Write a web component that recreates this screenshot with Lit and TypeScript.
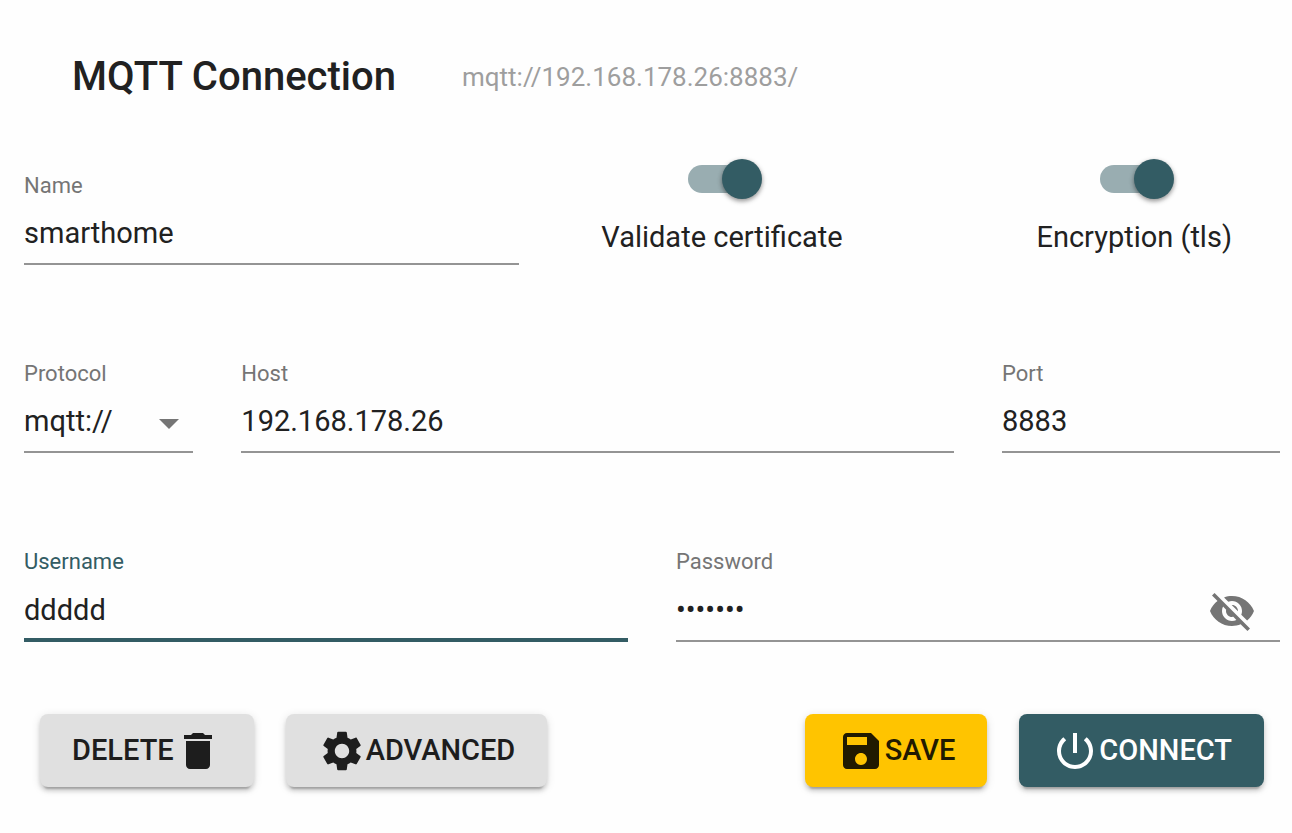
import { LitElement, html, css, svg } from "lit";
import { customElement, state } from "lit/decorators.js";

const ICONS = {
  remove: "M6 19c0 1.1.9 2 2 2h8c1.1 0 2-.9 2-2V7H6v12zM19 4h-3.5l-1-1h-5l-1 1H5v2h14V4z",
  settings:
    "M19.14 12.94c.04-.3.06-.61.06-.94 0-.32-.02-.64-.07-.94l2.03-1.58c.18-.14.23-.41.12-.61l-1.92-3.32c-.12-.22-.37-.29-.59-.22l-2.39.96c-.5-.38-1.03-.7-1.62-.94l-.36-2.54c-.04-.24-.24-.41-.48-.41h-3.84c-.24 0-.43.17-.47.41l-.36 2.54c-.59.24-1.13.57-1.62.94l-2.39-.96c-.22-.08-.47 0-.59.22L2.74 8.87c-.12.21-.08.47.12.61l2.03 1.58c-.05.3-.09.63-.09.94s.02.64.07.94l-2.03 1.58c-.18.14-.23.41-.12.61l1.92 3.32c.12.22.37.29.59.22l2.39-.96c.5.38 1.03.7 1.62.94l.36 2.54c.05.24.24.41.48.41h3.84c.24 0 .44-.17.47-.41l.36-2.54c.59-.24 1.13-.56 1.62-.94l2.39.96c.22.08.47 0 .59-.22l1.92-3.32c.12-.22.07-.47-.12-.61l-2.01-1.58zM12 15.6c-1.98 0-3.6-1.62-3.6-3.6s1.62-3.6 3.6-3.6 3.6 1.62 3.6 3.6-1.62 3.6-3.6 3.6z",
  save: "M17 3H5c-1.11 0-2 .9-2 2v14c0 1.1.89 2 2 2h14c1.1 0 2-.9 2-2V7l-4-4zm-5 16c-1.66 0-3-1.34-3-3s1.34-3 3-3 3 1.34 3 3-1.34 3-3 3zm3-10H5V5h10v4z",
  power:
    "M13 3h-2v10h2V3zm4.83 2.17l-1.42 1.42C17.99 7.86 19 9.81 19 12c0 3.87-3.13 7-7 7s-7-3.13-7-7c0-2.19 1.01-4.14 2.58-5.42L6.17 5.17C4.23 6.82 3 9.26 3 12c0 4.97 4.03 9 9 9s9-4.03 9-9c0-2.74-1.23-5.18-3.17-6.83z",
  hidden:
    "M12 7c2.76 0 5 2.24 5 5 0 .65-.13 1.26-.36 1.83l2.92 2.92c1.51-1.26 2.7-2.89 3.43-4.75-1.73-4.39-6-7.5-11-7.5-1.4 0-2.74.25-3.98.7l2.16 2.16C10.74 7.13 11.35 7 12 7zM2 4.27l2.28 2.28.46.46C3.08 8.3 1.78 10.02 1 12c1.73 4.39 6 7.5 11 7.5 1.55 0 3.03-.3 4.38-.84l.42.42L19.73 22 21 20.73 3.27 3 2 4.27zM7.53 9.8l1.55 1.55c-.05.21-.08.43-.08.65 0 1.66 1.34 3 3 3 .22 0 .44-.03.65-.08l1.55 1.55c-.67.33-1.41.53-2.2.53-2.76 0-5-2.24-5-5 0-.79.2-1.53.53-2.2zm4.31-.78l3.15 3.15.02-.16c0-1.66-1.34-3-3-3l-.17.01z",
  visible:
    "M12 4.5C7 4.5 2.73 7.61 1 12c1.73 4.39 6 7.5 11 7.5s9.27-3.11 11-7.5c-1.73-4.39-6-7.5-11-7.5zM12 17c-2.76 0-5-2.24-5-5s2.24-5 5-5 5 2.24 5 5-2.24 5-5 5zm0-8c-1.66 0-3 1.34-3 3s1.34 3 3 3 3-1.34 3-3-1.34-3-3-3z",
  caret: "M7 10l5 5 5-5z",
};

const icon = (name: keyof typeof ICONS) =>
  html`<svg class="icon" viewBox="0 0 24 24" aria-hidden="true">${svg`<path d=${ICONS[name]}></path>`}</svg>`;

@customElement("app-root")
export class AppRoot extends LitElement {
  @state() private protocol = "mqtt";
  @state() private host = "192.168.178.26";
  @state() private port = "8883";
  @state() private showPassword = false;

  static styles = css`
    :host {
      display: block;
      box-sizing: border-box;
      min-height: 100vh;
      padding: 48px 12px 40px 24px;
      background: #fefefe;
      color: #212121;
      font-family: Roboto, "Liberation Sans", sans-serif;
      --primary: #335c64;
      --muted: #757575;
    }
    .header {
      display: flex;
      align-items: center;
      gap: 66px;
      min-height: 58px;
      margin-bottom: 35px;
      padding-left: 48px;
    }
    .title {
      margin: 0;
      font-size: 40px;
      font-weight: 500;
      line-height: 48px;
    }
    .url {
      margin: 0;
      color: #9e9e9e;
      font-size: 26px;
      line-height: 32px;
    }
    .fields {
      display: grid;
      grid-template-columns: repeat(12, minmax(0, 1fr));
      gap: 97px 48px;
      align-items: end;
    }
    .field {
      display: flex;
      flex-direction: column;
    }
    .span-2 { grid-column: span 2; }
    .span-3 { grid-column: span 3; }
    .span-5 { grid-column: span 5; }
    .span-6 { grid-column: span 6; }
    .span-7 { grid-column: span 7; }
    .label {
      color: var(--muted);
      font-size: 22px;
      line-height: 24px;
    }
    .control {
      display: flex;
      align-items: center;
      height: 65px;
      border-bottom: 2px solid #949494;
    }
    .credential .control { height: 66px; }
    .active .label { color: var(--primary); }
    .active .control {
      border-color: var(--primary);
      box-shadow: inset 0 -2px var(--primary);
    }
    .input {
      flex: 1;
      min-width: 0;
      width: 100%;
      height: 40px;
      margin: 0;
      margin-top: 5px;
      padding: 0;
      border: 0;
      outline: 0;
      appearance: none;
      background: none;
      color: inherit;
      font: inherit;
      font-size: 29px;
      line-height: 40px;
    }
    .select-box {
      display: grid;
      grid-template-columns: minmax(0, 1fr) 48px;
    }
    .select-box .input { grid-area: 1 / 1 / 2 / 3; }
    .select-box .icon {
      grid-area: 1 / 2;
      margin-top: 8px;
      color: var(--muted);
      pointer-events: none;
    }
    .toggles {
      display: flex;
      justify-content: space-between;
      padding: 0 48px 8px 34px;
    }
    .toggle {
      display: flex;
      flex-direction: column;
      align-items: center;
      font-size: 29px;
      line-height: 40px;
      cursor: pointer;
    }
    .switch {
      appearance: none;
      display: flex;
      align-items: center;
      width: 68px;
      height: 28px;
      margin: 24px 0;
      border-radius: 14px;
      background: #bdbdbd;
      cursor: pointer;
    }
    .switch::before {
      content: "";
      flex: none;
      width: 40px;
      height: 40px;
      margin-left: -6px;
      border-radius: 50%;
      background: #fafafa;
      box-shadow: 0 2px 4px rgba(0, 0, 0, 0.35), 0 2px 6px rgba(0, 0, 0, 0.12);
    }
    .switch:checked { background: #99adb1; }
    .switch:checked::before {
      margin-left: 34px;
      background: var(--primary);
    }
    .icon {
      flex: none;
      display: block;
      width: 48px;
      height: 48px;
      fill: currentColor;
    }
    .reveal {
      margin: 8px 24px 0 0;
      padding: 0;
      border: 0;
      background: none;
      color: var(--muted);
      cursor: pointer;
    }
    .actions {
      display: flex;
      gap: 32px;
      margin-top: 72px;
      padding: 0 16px;
    }
    .spacer { flex: 1; margin: 0 -16px; }
    .button {
      display: flex;
      align-items: center;
      padding: 12px 32px;
      border: 0;
      border-radius: 8px;
      background: #e0e0e0;
      box-shadow: 0 6px 2px -4px rgba(0, 0, 0, 0.2), 0 4px 4px rgba(0, 0, 0, 0.14),
        0 2px 10px rgba(0, 0, 0, 0.12);
      color: #1d1d1d;
      font: inherit;
      font-size: 29px;
      font-weight: 500;
      line-height: 49px;
      text-transform: uppercase;
      cursor: pointer;
    }
    .save {
      background: #ffc400;
      color: #211a00;
    }
    .connect {
      background: var(--primary);
      color: #fff;
    }
  `;

  render() {
    return html`
      <header class="header">
        <h1 class="title">MQTT Connection</h1>
        <p class="url">${this.protocol}://${this.host}:${this.port}/</p>
      </header>
      <form @submit=${(e: Event) => e.preventDefault()}>
        <div class="fields">
          <div class="field span-5">
            <label class="label" for="name">Name</label>
            <div class="control"><input class="input" id="name" type="text" value="smarthome" /></div>
          </div>
          <div class="toggles span-7">
            <label class="toggle" for="validate">
              <input class="switch" id="validate" type="checkbox" checked />
              Validate certificate
            </label>
            <label class="toggle" for="tls">
              <input class="switch" id="tls" type="checkbox" checked />
              Encryption (tls)
            </label>
          </div>

          <div class="field span-2">
            <label class="label" for="protocol">Protocol</label>
            <div class="control select-box">
              <select
                class="input"
                id="protocol"
                @change=${(e: Event) => (this.protocol = (e.target as HTMLSelectElement).value)}
              >
                <option value="mqtt">mqtt://</option>
                <option value="ws">ws://</option>
              </select>
              ${icon("caret")}
            </div>
          </div>
          <div class="field span-7">
            <label class="label" for="host">Host</label>
            <div class="control">
              <input
                class="input"
                id="host"
                type="text"
                .value=${this.host}
                @input=${(e: Event) => (this.host = (e.target as HTMLInputElement).value)}
              />
            </div>
          </div>
          <div class="field span-3">
            <label class="label" for="port">Port</label>
            <div class="control">
              <input
                class="input"
                id="port"
                type="text"
                inputmode="numeric"
                .value=${this.port}
                @input=${(e: Event) => (this.port = (e.target as HTMLInputElement).value)}
              />
            </div>
          </div>

          <div class="field credential span-6 active">
            <label class="label" for="username">Username</label>
            <div class="control"><input class="input" id="username" type="text" value="ddddd" /></div>
          </div>
          <div class="field credential span-6">
            <label class="label" for="password">Password</label>
            <div class="control">
              <input
                class="input"
                id="password"
                type=${this.showPassword ? "text" : "password"}
                value="secret1"
              />
              <button
                class="reveal"
                type="button"
                aria-label="Toggle password visibility"
                @click=${() => (this.showPassword = !this.showPassword)}
              >
                ${icon(this.showPassword ? "visible" : "hidden")}
              </button>
            </div>
          </div>
        </div>

        <div class="actions">
          <button class="button" type="button">Delete ${icon("remove")}</button>
          <button class="button" type="button">${icon("settings")} Advanced</button>
          <span class="spacer"></span>
          <button class="button save" type="button">${icon("save")} Save</button>
          <button class="button connect" type="submit">${icon("power")} Connect</button>
        </div>
      </form>
    `;
  }
}
